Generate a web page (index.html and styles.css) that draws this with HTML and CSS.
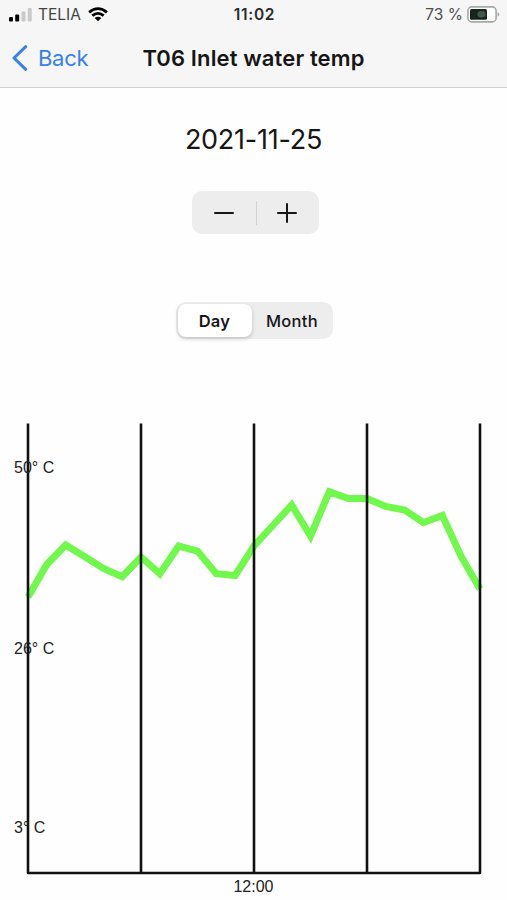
FILE: index.html
```html
<!doctype html>
<html lang="en">
<head>
<meta charset="utf-8">
<meta name="viewport" content="width=device-width, initial-scale=1">
<title>T06 Inlet water temp</title>
<link rel="stylesheet" href="styles.css">
</head>

<body>

<header>
<div class="status">
 <div class="carrier">
  <svg class="signal" width="23" height="14" viewBox="0 0 23 14">
   <rect x="0" y="9" width="4" height="4.5" rx="1" />
   <rect x="6.2" y="6.5" width="4" height="7" rx="1" />
   <rect class="off" x="12.5" y="3.5" width="4" height="10" rx="1" />
   <rect class="off" x="18.7" y="0" width="4" height="13.5" rx="1" />
  </svg>
  <span class="name">TELIA</span>
  <svg class="wifi" width="20" height="15" viewBox="0 0 20 15">
   <path class="arc" d="M1.1 5.4 Q10 -2.2 18.9 5.4" />
   <path class="arc" d="M4.3 8.7 Q10 4 15.7 8.7" />
   <path d="M10 14.2 L6.7 11 Q10 8.4 13.3 11 Z" />
  </svg>
 </div>
 <div class="clock">11:02</div>
 <div class="power">
  <span class="percent">73 %</span>
  <svg width="33" height="17" viewBox="0 0 33 17">
   <rect class="case" x="0.9" y="0.9" width="28.2" height="15" rx="4" />
   <rect class="level" x="3" y="3" width="17" height="10.8" rx="1.5" />
   <ellipse class="glow" cx="14.5" cy="8.3" rx="4" ry="3.2" />
   <path class="cap" d="M30.6 6 Q34 8.4 30.6 10.8 Z" />
  </svg>
 </div>
</div>

<div class="nav">
 <a class="back" href="#"><svg width="16" height="26" viewBox="0 0 16 26"><path d="M13.7 1.7 L2 13 L13.7 24.3" /></svg><span>Back</span></a>
 <h1>T06 Inlet water temp</h1>
</div>
</header>

<main>
<div class="date">2021-11-25</div>

<div class="stepper">
 <button type="button" aria-label="Previous"><svg width="20" height="20" viewBox="0 0 20 20"><path d="M1 10 H19" /></svg></button>
 <button type="button" aria-label="Next"><svg width="20" height="20" viewBox="0 0 20 20"><path d="M1 10 H19 M10 1 V19" /></svg></button>
</div>

<div class="segmented">
 <button type="button" class="selected"><span>Day</span></button>
 <button type="button"><span>Month</span></button>
</div>

<svg class="chart" width="507" height="480" viewBox="0 420 507 480">
 <polyline class="temp" points="28,597 46.8,564.5 65.7,545 84.5,556.5 103.3,568.5 122.2,576.7 141,557 159.8,573.8 178.7,546 197.5,551 216.3,573.7 235.2,575.5 254,546 272.8,525.5 291.7,505 310.5,536 329.3,491.7 348.2,498.5 367,498.5 385.8,506.5 404.7,510 423.5,522.7 442.3,515.5 461.2,556.5 480,589" />
 <path class="grid" d="M28 423.5 V873 H480 V423.5 M141 423.5 V873 M254 423.5 V873 M367 423.5 V873" />
 <text x="14" y="473">50° C</text>
 <text x="14" y="653.5">26° C</text>
 <text x="14" y="833">3° C</text>
 <text x="253.5" y="892" text-anchor="middle">12:00</text>
</svg>
</main>

</body>
</html>
```

FILE: styles.css
```css
body {
	margin: 0;
	background: #fefefe;
	color: #161616;
	font-family: Inter, "Liberation Sans", sans-serif;
}

button {
	border: 0;
	padding: 0;
	background: none;
	color: inherit;
	font-family: inherit;
}

svg { display: block; }

header {
	box-sizing: border-box;
	height: 88px;
	background: #f6f6f6;
	border-bottom: 1px solid #cfcfcf;
}

.status {
	display: grid;
	grid-template-columns: 1fr auto 1fr;
	align-items: center;
	height: 29px;
	padding: 0 7px 0 9px;
	font-size: 15.5px;
	line-height: 29px;
}

.carrier, .power { display: flex; align-items: center; }
.carrier .name { margin: 0 7px 0 6px; color: #444; }
.signal .off { fill: #c9c9c9; }
.wifi .arc { fill: none; stroke: #000; stroke-width: 2.8; }
.clock { font-weight: 600; color: #2b2b2b; letter-spacing: 0.7px; }
.power { justify-content: flex-end; gap: 4px; color: #505050; }
.case { fill: #fff; stroke: #a5aaa5; stroke-width: 1.6; }
.level { fill: #17251d; }
.glow { fill: #40574a; }
.cap { fill: #a5aaa5; }

.nav {
	display: grid;
	grid-template-columns: 1fr auto 1fr;
	align-items: center;
	height: 58px;
	padding: 0 12px;
}

.back {
	display: flex;
	align-items: center;
	gap: 10px;
	color: #3880f0;
	font-size: 22px;
	letter-spacing: -0.3px;
	text-decoration: none;
}

.back path {
	fill: none;
	stroke: #3880f0;
	stroke-width: 3;
	stroke-linecap: round;
	stroke-linejoin: round;
}

h1 { margin: 0; font-size: 22px; font-weight: 600; line-height: 28px; letter-spacing: 0.13px; }

main {
	display: flex;
	flex-direction: column;
	align-items: center;
}

.date {
	margin-top: 35px;
	font-size: 27px;
	line-height: 34px;
	letter-spacing: -0.25px;
}

.stepper {
	display: flex;
	width: 127px;
	height: 43px;
	margin: 34px 0 68px 4px;
	border-radius: 10px;
	background: #ededee;
}

.stepper button {
	display: flex;
	flex: 1;
	align-items: center;
	justify-content: center;
}

.stepper button + button {
	background: linear-gradient(#d2d2d3, #d2d2d3) 0 center / 1px 24px no-repeat;
}

.stepper path { fill: none; stroke: #161616; stroke-width: 2; stroke-linecap: round; }

.segmented {
	display: flex;
	box-sizing: border-box;
	width: 157px;
	height: 37px;
	margin-left: 1px;
	padding: 2px;
	border-radius: 10px;
	background: #ededee;
}

.segmented button {
	flex: 1;
	padding-left: 2px;
	border-radius: 8px;
	font-size: 16.5px;
	font-weight: 500;
	letter-spacing: 0.3px;
}

.segmented .selected {
	flex: 0 0 74px;
	padding-left: 0;
	background: #fff;
	font-weight: 600;
	box-shadow: 0 2px 4px rgba(0,0,0,0.18);
}

.chart { margin-top: 81px; }
.temp { fill: none; stroke: #70f84c; stroke-width: 7; }
.grid { fill: none; stroke: #111; stroke-width: 2.6; stroke-linejoin: round; }

.chart text {
	fill: #222;
	font-family: "Liberation Sans", sans-serif;
	font-size: 16px;
}
```
